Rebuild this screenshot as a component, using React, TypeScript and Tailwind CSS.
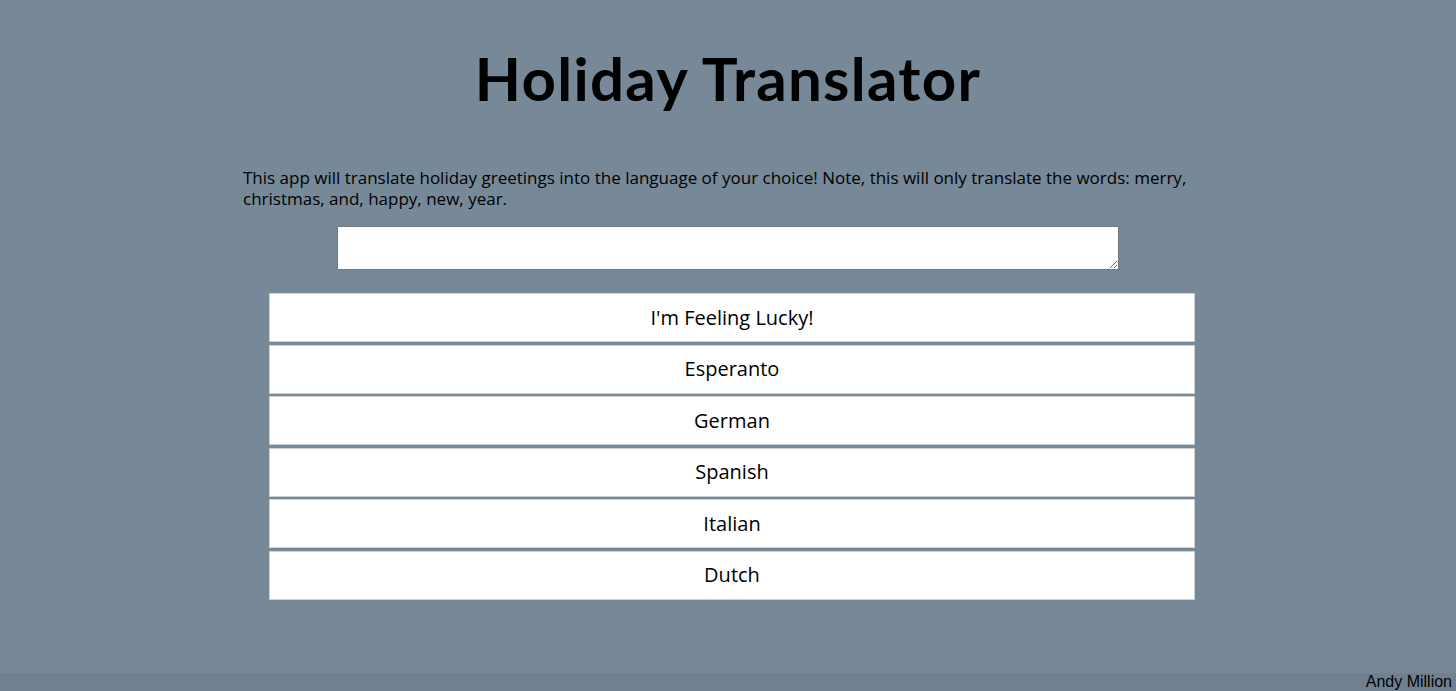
const LANGUAGES = ["I'm Feeling Lucky!", 'Esperanto', 'German', 'Spanish', 'Italian', 'Dutch'];

export default function App() {
  return (
    <div className="min-h-screen flex flex-col bg-[#778899] text-black font-['Open_Sans','Noto_Sans',sans-serif]">
      <main className="flex-1 flex flex-col items-center">
        <h1 className="mt-[38px] text-[60px] leading-[80px] font-bold tracking-[1.3px] font-['Lato',sans-serif]">
          Holiday Translator
        </h1>
        <p className="mt-[49px] w-[970px] text-[17px] leading-[21px]">
          This app will translate holiday greetings into the language of your choice! Note, this will only translate the words: merry, christmas, and, happy, new, year.
        </p>
        <textarea className="mt-[17px] w-[782px] h-[44px] bg-white border border-[#767676] resize-y" />
        <div className="mt-[23px] ml-[8px] w-[926px] flex flex-col gap-[2.6px]">
          {LANGUAGES.map((lang) => (
            <button
              key={lang}
              className="h-[49px] bg-white border border-[#cfcfcf] text-[20px] text-black"
            >
              {lang}
            </button>
          ))}
        </div>
      </main>
      <footer className="h-[18px] bg-[#708090] flex justify-end items-center pr-[4px] text-[16px] leading-[18px] font-['Liberation_Sans',sans-serif]">
        Andy Million
      </footer>
    </div>
  );
}
